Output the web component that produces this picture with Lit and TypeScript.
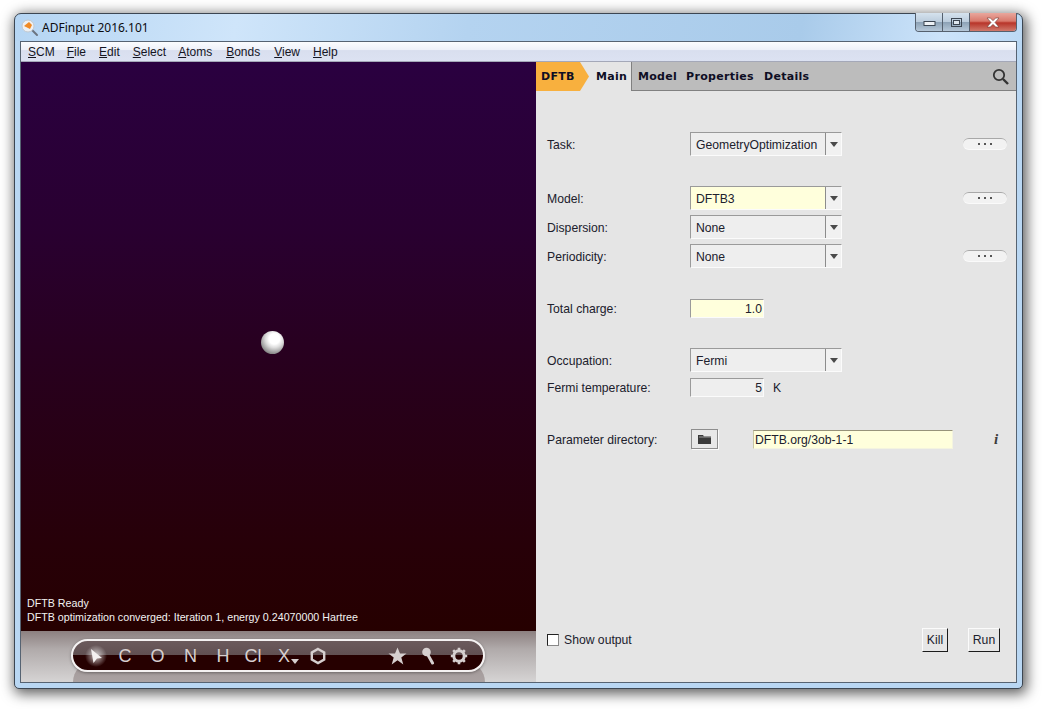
import { LitElement, html, css, svg } from "lit";
import { customElement } from "lit/decorators.js";

const MENU = [
  ["S", "CM", "m-scm"],
  ["F", "ile", "m-file"],
  ["E", "dit", "m-edit"],
  ["S", "elect", "m-select"],
  ["A", "toms", "m-atoms"],
  ["B", "onds", "m-bonds"],
  ["V", "iew", "m-view"],
  ["H", "elp", "m-help"],
];

@customElement("app-root")
export class AppRoot extends LitElement {
  static styles = css`
    :host { display: block; width: 1042px; height: 709px; box-sizing: border-box; padding: 13px 19px 20px 14px; background: #fff; font-family: "Liberation Sans", Arial, sans-serif; font-size: 12.2px; color: #20202c; overflow: hidden; }
    * { box-sizing: border-box; }
    .window { width: 1009px; height: 676px; display: flex; flex-direction: column; border: 1px solid #3c4652; border-radius: 7px 7px 5px 5px; background: linear-gradient(100deg, #b5d5f3 0%, #cfe5fa 22%, #b4d3f0 45%, #a9cbea 78%, #cce3fa 92%, #bcd9f4 100%) top / 100% 27px no-repeat, #b9d7f3; box-shadow: 2px 3px 13px 2px rgba(0,0,0,.62); }
    .title { height: 27px; flex: none; display: flex; align-items: flex-start; position: relative; }
    .app-icon { width: 18px; height: 18px; margin: 5px 0 0 6px; }
    .title-text { margin: 6px 0 0 3px; font-family: "Noto Sans", sans-serif; font-size: 12px; line-height: 16px; color: #0c0c10; }
    .wc { margin: -1px 5px 0 auto; display: flex; height: 19px; border: 1px solid #55606e; border-top: none; border-radius: 0 0 4px 4px; overflow: hidden; }
    .wc div { display: flex; align-items: center; justify-content: center; }
    .wc .b { width: 27px; background: linear-gradient(#d5e2ee 0%, #bccddd 48%, #8da2b6 52%, #b6c8d9 100%); border-right: 1px solid #55606e; }
    .wc .x { width: 46px; background: linear-gradient(#e9a79d 0%, #d9796c 45%, #b8352a 55%, #d07a6c 100%); }
    .client { flex: 1; min-height: 0; margin: 0 5px 5px; border: 1px solid #566372; display: flex; flex-direction: column; background: #e5e5e5; }
    .menu { height: 20px; flex: none; display: flex; align-items: center; background: linear-gradient(#fbfcfe 0%, #eef1f9 40%, #d9dfef 45%, #dce2f2 100%); border-bottom: 1px solid #a4a8b8; position: relative; font-size: 12px; color: #15151f; padding-left: 7px; }
    .menu span { display: block; }
    .m-scm { margin-right: 12px; } .m-file { margin-right: 13px; } .m-edit { margin-right: 13px; } .m-select { margin-right: 12px; } .m-atoms { margin-right: 14px; } .m-bonds { margin-right: 14px; } .m-view { margin-right: 13px; }
    .main { flex: 1; min-height: 0; display: flex; }
    .left { width: 515px; flex: none; display: flex; flex-direction: column; }
    .viewport { flex: 1; min-height: 0; position: relative; background: linear-gradient(#2a0040 0%, #290030 30%, #280020 50%, #270008 85%, #260000 100%); display: flex; flex-direction: column; justify-content: flex-end; padding: 0 0 7px 6px; color: #f2f2f2; font-size: 10.7px; line-height: 14px; }
    .ball { position: absolute; left: 240px; top: 269px; width: 23px; height: 23px; border-radius: 50%; background: radial-gradient(circle at 58% 34%, #ffffff 0%, #ffffff 26%, #dcdcdc 44%, #909090 72%, #3c3c3c 100%); }
    .dock { height: 51px; flex: none; position: relative; background: linear-gradient(#8c8080 0%, #b0aaaa 35%, #d6d4d4 100%); padding: 8px 0 0 50px; overflow: hidden; }
    .reflect { position: absolute; left: 52px; top: 31px; width: 412px; height: 44px; border-radius: 20px; background: linear-gradient(#a09696, #b8b2b2); }
    .pill { position: relative; width: 414px; height: 33px; border: 2px solid #f5f2f2; border-radius: 17px; background: linear-gradient(#6b5a5c 0%, #615052 48%, #260000 50%, #260000 100%); display: grid; grid-template-columns: 30px 28px 37px 29px 36px 24px 38px 30px 49px 30px 33px 28px; padding-left: 8px; align-items: center; color: #d6cfcf; font-size: 18px; line-height: 1; box-shadow: 0 1px 3px rgba(0,0,0,.35); }
    .pill > * { justify-self: center; }
    .spacer { width: 1px; }
    .xwrap { position: relative; }
    .xtri { position: absolute; left: 13px; bottom: 1px; width: 0; height: 0; border-left: 4px solid transparent; border-right: 4px solid transparent; border-top: 5px solid #d6cfcf; }
    .right { flex: 1; min-width: 0; display: flex; flex-direction: column; }
    .tabs { height: 29px; flex: none; display: flex; background: #bcbcbc; border-bottom: 1px solid #808080; font-family: "DejaVu Sans", sans-serif; font-size: 11px; font-weight: 700; color: #0e0e24; line-height: 30px; letter-spacing: .3px; }
    .t-orange { width: 45px; background: #e5e5e5; position: relative; height: 29px; flex: none; }
    .t-orange div { position: absolute; left: 0; top: 0; width: 53px; height: 29px; padding-left: 5px; background: #f8b03e; clip-path: polygon(0 0, 44px 0, 53px 50%, 44px 100%, 0 100%); }
    .t-main { width: 51px; height: 29px; background: #e5e5e5; border-right: 1px solid #808080; padding-left: 15px; flex: none; }
    .t { margin-left: 9px; }
    .t-model { margin-left: 6px; }
    .t-details { margin-left: 10px; }
    .search { margin: 6px 7px 0 auto; width: 17px; height: 17px; }
    .form { flex: 1; min-height: 0; display: flex; flex-direction: column; padding: 41px 9px 30px 11px; }
    .row { display: flex; align-items: center; flex: none; }
    .mt-30 { margin-top: 30px; } .mt-31 { margin-top: 31px; } .mt-5 { margin-top: 5px; } .mt-6 { margin-top: 6px; } .mt-32 { margin-top: 32px; }
    .label { width: 143px; flex: none; padding-top: 1px; }
    .combo { width: 152px; height: 24px; display: flex; border: 1px solid; border-color: #9a9a9a #fbfbfb #fbfbfb #9a9a9a; background: #eeeeee; }
    .combo .val { flex: 1; line-height: 23px; padding: 1px 0 0 5px; }
    .combo.y .val { background: #ffffdc; }
    .combo .arr { width: 16px; flex: none; border-left: 1px solid #8c8c8c; background: #f1f1f1; display: flex; align-items: center; justify-content: center; }
    .tri { width: 0; height: 0; border-left: 4px solid transparent; border-right: 4px solid transparent; border-top: 5px solid #4a4a4a; }
    .dots { margin-left: auto; width: 44px; height: 12px; border-radius: 6px; background: #f2f2f2; border-top: 1px solid #a8a8a8; border-bottom: 1px solid #fafafa; display: flex; align-items: center; justify-content: center; gap: 4px; }
    .dots i { width: 2px; height: 2px; background: #555; display: block; }
    .field { width: 74px; height: 19px; border: 1px solid; border-color: #9a9a9a #fbfbfb #fbfbfb #9a9a9a; line-height: 18px; text-align: right; padding-right: 1px; background: #eeeeee; }
    .field.y { background: #ffffdc; }
    .unit { margin-left: 9px; padding-top: 1px; }
    .folder { width: 27px; height: 20px; margin-left: 1px; border: 1px solid #8e8e8e; box-shadow: 1px 1px 0 #fbfbfb; background: #e8e8e8; display: flex; align-items: center; justify-content: center; }
    .path { width: 200px; height: 19px; margin-left: 35px; background: #ffffdc; border-top: 1px solid #97937a; border-left: 1px solid #c8c6a4; border-right: 1px solid #f4f4e0; border-bottom: 1px solid #f4f4e0; line-height: 18px; padding-left: 1px; }
    .info { margin-left: 41px; font-family: "Liberation Serif", serif; font-weight: 700; font-style: italic; font-size: 15px; color: #3c3c3c; line-height: 20px; }
    .bottom { margin-top: auto; height: 24px; }
    .check { width: 12px; height: 12px; border: 1px solid #222; background: #fff; border-right-color: #888; border-bottom-color: #888; margin-right: 5px; }
    .btn { height: 24px; border: 1px solid; border-color: #fbfbfb #1c1c1c #1c1c1c #fbfbfb; background: #e6e6e6; display: flex; align-items: center; justify-content: center; }
    .kill { width: 26px; margin-left: auto; } .run { width: 32px; margin: 0 7px 0 20px; }
  `;

  private combo(value: string, yellow = false) {
    return html`<div class="combo ${yellow ? "y" : ""}"><div class="val">${value}</div><div class="arr"><div class="tri"></div></div></div>`;
  }
  private dots() {
    return html`<div class="dots"><i></i><i></i><i></i></div>`;
  }

  render() {
    return html`<div class="window">
      <div class="title">
        <svg class="app-icon" viewBox="0 0 18 18">
          <path d="M10 10l6 6" stroke="#6c7480" stroke-width="2" stroke-linecap="round"/>
          <circle cx="7" cy="7" r="6" fill="#eef0f2" stroke="#c2c8ce" stroke-width="1"/>
          <path d="M3 7l5-4 3 3-2 4z" fill="#f08a24"/>
        </svg>
        <div class="title-text">ADFinput 2016.101</div>
        <div class="wc">
          <div class="b"><svg width="13" height="10" viewBox="0 0 13 10"><rect x="1" y="4.5" width="11" height="4" fill="#eef2f6" stroke="#3c4652"/></svg></div>
          <div class="b"><svg width="13" height="11" viewBox="0 0 13 11"><rect x="1.5" y="1.5" width="10" height="8" fill="none" stroke="#3c4652" stroke-width="1"/><rect x="3.5" y="3.5" width="6" height="4" fill="#dfe8f0" stroke="#3c4652"/></svg></div>
          <div class="x"><svg width="14" height="11" viewBox="0 0 14 11"><path d="M1 1h3.2L7 3.6 9.8 1H13L9 5.5l4 4.5H9.8L7 7.4 4.2 10H1l4-4.5z" fill="#fff" stroke="#6e3a34" stroke-width=".6"/></svg></div>
        </div>
      </div>
      <div class="client">
        <div class="menu">${MENU.map((m) => html`<span class=${m[2]}><u>${m[0]}</u>${m[1]}</span>`)}</div>
        <div class="main">
          <div class="left">
            <div class="viewport">
              <div class="ball"></div>
              <div>DFTB Ready</div>
              <div>DFTB optimization converged: Iteration 1, energy 0.24070000 Hartree</div>
            </div>
            <div class="dock">
              <div class="reflect"></div>
              <div class="pill">
                <svg width="22" height="24" viewBox="0 0 22 24">
                  <defs><radialGradient id="gl"><stop offset="0" stop-color="#fff" stop-opacity=".75"/><stop offset="1" stop-color="#fff" stop-opacity="0"/></radialGradient></defs>
                  <circle cx="11" cy="12" r="11" fill="url(#gl)"/>
                  <path d="M6 5l11 9-5 0.5-3.5 4.5z" fill="#f4f0f0"/>
                </svg>
                <span>C</span><span>O</span><span>N</span><span>H</span><span>Cl</span>
                <span class="xwrap">X<i class="xtri"></i></span>
                <svg width="18" height="18" viewBox="0 0 18 18"><path d="M9 2l6.2 3.5v7L9 16l-6.2-3.5v-7z" fill="none" stroke="#d6cfcf" stroke-width="2.4"/></svg>
                <span class="spacer"></span>
                <svg width="19" height="18" viewBox="0 0 19 18"><path d="M9.5 0.5l2.5 6h6.5l-5.2 4 2 7-5.8-4.2-5.8 4.2 2-7-5.2-4h6.5z" fill="#d6cfcf"/></svg>
                <svg width="16" height="18" viewBox="0 0 16 18"><circle cx="5.5" cy="5" r="4.3" fill="#d6cfcf"/><path d="M7 8l4.5 8" stroke="#d6cfcf" stroke-width="3" stroke-linecap="round"/></svg>
                <svg width="18" height="18" viewBox="0 0 18 18"><circle cx="9" cy="9" r="5.2" fill="none" stroke="#d6cfcf" stroke-width="3"/><path d="M9 .8v3M9 14.2v3M.8 9h3M14.2 9h3M3.2 3.2l2.1 2.1M12.7 12.7l2.1 2.1M3.2 14.8l2.1-2.1M12.7 5.3l2.1-2.1" stroke="#d6cfcf" stroke-width="2.6"/></svg>
              </div>
            </div>
          </div>
          <div class="right">
            <div class="tabs">
              <div class="t-orange"><div>DFTB</div></div>
              <div class="t-main">Main</div>
              <div class="t t-model">Model</div>
              <div class="t">Properties</div>
              <div class="t t-details">Details</div>
              <svg class="search" viewBox="0 0 17 17">${svg`<circle cx="7" cy="7" r="5.2" fill="none" stroke="#333" stroke-width="1.8"/><path d="M11 11l5 5" stroke="#333" stroke-width="2.4"/>`}</svg>
            </div>
            <div class="form">
              <div class="row"><div class="label">Task:</div>${this.combo("GeometryOptimization")}${this.dots()}</div>
              <div class="row mt-30"><div class="label">Model:</div>${this.combo("DFTB3", true)}${this.dots()}</div>
              <div class="row mt-5"><div class="label">Dispersion:</div>${this.combo("None")}</div>
              <div class="row mt-5"><div class="label">Periodicity:</div>${this.combo("None")}${this.dots()}</div>
              <div class="row mt-31"><div class="label">Total charge:</div><div class="field y">1.0</div></div>
              <div class="row mt-30"><div class="label">Occupation:</div>${this.combo("Fermi")}</div>
              <div class="row mt-6"><div class="label">Fermi temperature:</div><div class="field">5</div><div class="unit">K</div></div>
              <div class="row mt-32">
                <div class="label">Parameter directory:</div>
                <div class="folder"><svg width="16" height="12" viewBox="0 0 16 12"><path d="M1 2h5l1 1.5h7V11H1z" fill="#3a3a3a"/><path d="M2 4h12" stroke="#999" stroke-width="1"/></svg></div>
                <div class="path">DFTB.org/3ob-1-1</div>
                <div class="info">i</div>
              </div>
              <div class="row bottom">
                <div class="check"></div><div>Show output</div>
                <div class="btn kill">Kill</div><div class="btn run">Run</div>
              </div>
            </div>
          </div>
        </div>
      </div>
    </div>`;
  }
}
